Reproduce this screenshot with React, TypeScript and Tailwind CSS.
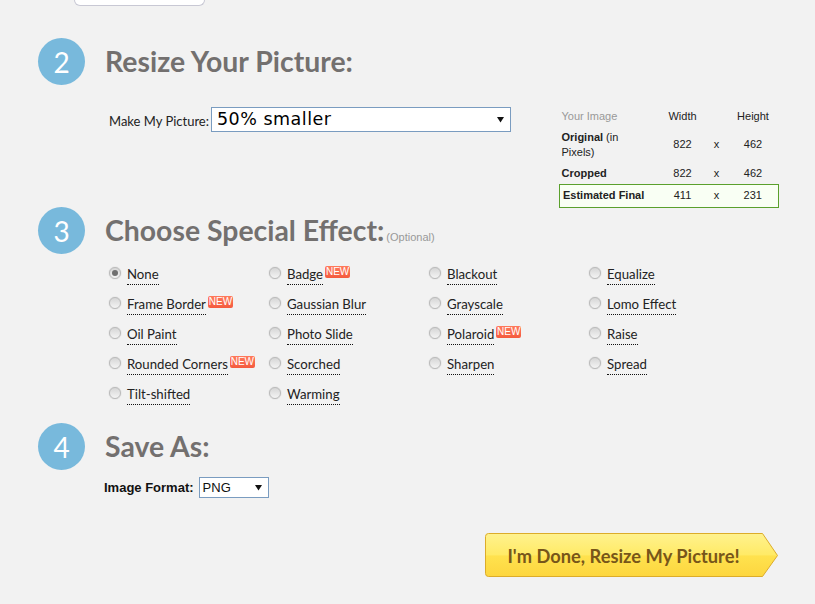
import { ReactNode } from "react";

const effects = [
  { name: "None", checked: true },
  { name: "Badge", isNew: true },
  { name: "Blackout" },
  { name: "Equalize" },
  { name: "Frame Border", isNew: true },
  { name: "Gaussian Blur" },
  { name: "Grayscale" },
  { name: "Lomo Effect" },
  { name: "Oil Paint" },
  { name: "Photo Slide" },
  { name: "Polaroid", isNew: true },
  { name: "Raise" },
  { name: "Rounded Corners", isNew: true },
  { name: "Scorched" },
  { name: "Sharpen" },
  { name: "Spread" },
  { name: "Tilt-shifted" },
  { name: "Warming" },
];

const StepHeading = ({ step, children }: { step: number; children: ReactNode }) => (
  <div className="flex items-center h-[47px] pl-[38px]">
    <div className="w-[47px] h-[47px] rounded-full bg-[#78b9dc] text-white flex items-center justify-center text-[28px] font-['Lato',sans-serif] shrink-0">
      {step}
    </div>
    <h2 className="ml-[20px] text-[28.4px] font-bold text-[#73706f] font-['Lato',sans-serif] leading-none whitespace-nowrap">
      {children}
    </h2>
  </div>
);

const Caret = () => (
  <svg width="7" height="7" viewBox="0 0 7 7" className="shrink-0">
    <path d="M0 1h7L3.5 6.5z" fill="#111" />
  </svg>
);

const Radio = ({ checked }: { checked?: boolean }) => (
  <span className="w-[12px] h-[12px] mt-[2px] rounded-full border border-[#b9b9b9] bg-gradient-to-b from-[#d6d6d6] to-[#f4f4f4] flex items-center justify-center shrink-0 shadow-[0_0_1px_#aaa]">
    {checked && <span className="w-[6px] h-[6px] rounded-full bg-[#6f6f6f]" />}
  </span>
);

const NewBadge = () => (
  <span className="ml-[2px] mt-[1px] w-[25px] h-[12px] rounded-[2px] bg-gradient-to-b from-[#ff7a5c] to-[#f45a3e] text-white text-center text-[10px] leading-[12px] font-['Liberation_Sans',sans-serif]">
    NEW
  </span>
);

const SizeTable = () => (
  <table className="w-[219px] table-fixed border-collapse text-[11px] text-[#222] font-['Liberation_Sans',sans-serif] text-center">
    <colgroup>
      <col className="w-[100px]" />
      <col className="w-[46px]" />
      <col className="w-[22px]" />
      <col className="w-[51px]" />
    </colgroup>
    <tbody>
      <tr className="h-[20px]">
        <td className="text-left pl-[2px] text-[#999]">Your Image</td>
        <td>Width</td>
        <td></td>
        <td>Height</td>
      </tr>
      <tr className="h-[37px] leading-[15px]">
        <td className="text-left pl-[2px] pr-[12px]"><b>Original</b> (in Pixels)</td>
        <td>822</td>
        <td>x</td>
        <td>462</td>
      </tr>
      <tr className="h-[21px]">
        <td className="text-left pl-[2px] font-bold">Cropped</td>
        <td>822</td>
        <td>x</td>
        <td>462</td>
      </tr>
      <tr className="h-[23px] bg-[#f9fff4] border border-[#5aa02c]">
        <td className="text-left pl-[3px] font-bold">Estimated Final</td>
        <td>411</td>
        <td>x</td>
        <td>231</td>
      </tr>
    </tbody>
  </table>
);

const DoneButton = () => (
  <button className="relative w-[294px] h-[45px] block">
    <svg width="294" height="45" viewBox="0 0 294 45" className="absolute inset-0">
      <defs>
        <linearGradient id="doneFill" x1="0" y1="0" x2="0" y2="1">
          <stop offset="0" stopColor="#fff28e" />
          <stop offset="0.5" stopColor="#ffea66" />
          <stop offset="0.52" stopColor="#ffe24e" />
          <stop offset="1" stopColor="#fdd63f" />
        </linearGradient>
      </defs>
      <path
        d="M3.5 0.5H277.5L292.5 22.5L277.5 43.5H3.5Q0.5 43.5 0.5 40.5V3.5Q0.5 0.5 3.5 0.5Z"
        fill="url(#doneFill)"
        stroke="#dcac2a"
      />
    </svg>
    <span className="relative block pr-[17px] text-center text-[18.3px] font-bold leading-[46px] text-[#77561a] font-['Lato',sans-serif] whitespace-nowrap">
      I'm Done, Resize My Picture!
    </span>
  </button>
);

export default function App() {
  return (
    <div className="relative w-[815px] h-[604px] overflow-hidden bg-[#f2f2f2] font-['Lato',sans-serif]">
      {/* bottom edge of the card from step 1 */}
      <div className="ml-[74px] w-[131px] h-[6px] bg-white border border-t-0 border-[#c8c8d4] rounded-b-[12px]" />

      <div className="pt-[32px]">
        <StepHeading step={2}>Resize Your Picture:</StepHeading>
      </div>

      <div className="flex h-[122px]">
        <div className="w-[559px] pl-[109px] pt-[22px] flex items-start">
          <span className="text-[13px] leading-[20px] text-[#222] mt-[4px] whitespace-nowrap">Make My Picture:</span>
          <div className="ml-[2px] w-[300px] h-[25px] bg-white border border-[#7a9cc0] flex items-center justify-between pl-[5px] pr-[6px]">
            <span className="text-[17.5px] text-black font-['DejaVu_Sans',sans-serif] tracking-[0.5px]">50% smaller</span>
            <Caret />
          </div>
        </div>
        <div className="pt-[21px]">
          <SizeTable />
        </div>
      </div>

      <div className="flex items-end">
        <StepHeading step={3}>Choose Special Effect:</StepHeading>
        <span className="ml-[2px] mb-[9px] text-[11px] text-[#999] font-['Liberation_Sans',sans-serif]">(Optional)</span>
      </div>

      <div className="mt-[10px] ml-[109px] grid grid-cols-[repeat(4,160px)] auto-rows-[30px]">
        {effects.map((e) => (
          <div key={e.name} className="flex items-start pt-[1px]">
            <Radio checked={e.checked} />
            <span className="ml-[6px] text-[13.2px] leading-[19px] text-[#222] border-b border-dotted border-[#111] whitespace-nowrap">
              {e.name}
            </span>
            {e.isNew && <NewBadge />}
          </div>
        ))}
      </div>

      <div className="mt-[9px]">
        <StepHeading step={4}>Save As:</StepHeading>
      </div>

      <div className="mt-[7px] ml-[104px] flex items-center">
        <span className="text-[13px] font-bold text-[#111] font-['Liberation_Sans',sans-serif]">Image Format:</span>
        <div className="ml-[5px] w-[70px] h-[21px] bg-white border border-[#7a9cc0] flex items-center justify-between pl-[3px] pr-[6px]">
          <span className="text-[13px] text-[#111] font-['Liberation_Sans',sans-serif]">PNG</span>
          <Caret />
        </div>
      </div>

      <div className="mt-[35px] ml-[485px]">
        <DoneButton />
      </div>
    </div>
  );
}
